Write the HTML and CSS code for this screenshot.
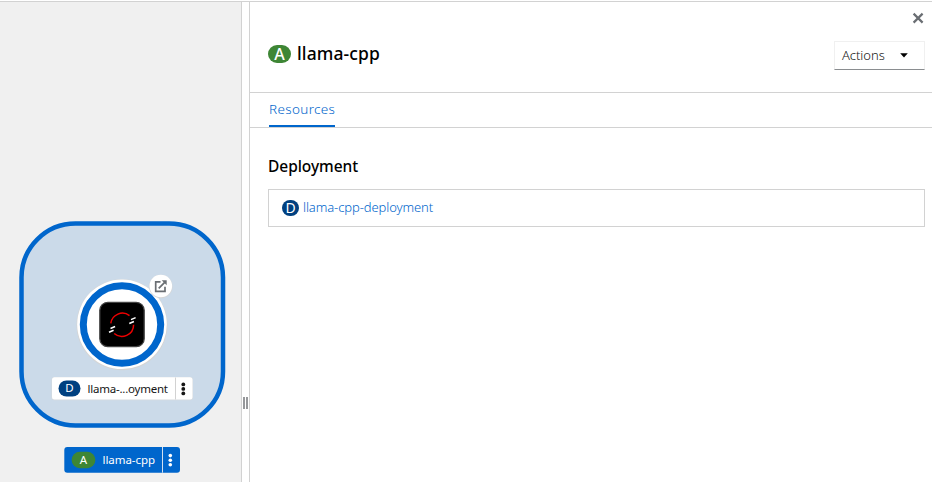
FILE: index.html
```html
<!DOCTYPE html>
<html lang="en">
<head>
<meta charset="utf-8">
<title>Topology</title>
<link rel="stylesheet" href="styles.css">
</head>
<body>
<div class="page">
  <main class="topology">
    <svg class="graph" width="241" height="480" viewBox="0 2 241 480">
      <rect class="group" x="21.5" y="223.5" width="201.500" height="202" rx="54"/>
      <circle class="node-shadow" cx="122" cy="324.800" r="45.500"/>
      <circle class="node-bg" cx="122" cy="324.300" r="44.800"/>
      <circle class="node-ring" cx="122" cy="324.500" r="38.700"/>
      <rect class="app-icon" x="99.800" y="302.300" width="44.400" height="44.400" rx="8"/>
      <g class="arc">
        <path d="M110.800 323.300A11.700 11.700 0 0 1 129.500 315.600"/>
        <path d="M133.600 324.700A11.700 11.700 0 0 1 114.200 333.500"/>
      </g>
      <path class="dashes" d="M131 319.600l4.600-2M129.300 323.500l4.600-2M110.500 328.500l4.600-2M109 332.300l4.600-2"/>
      <circle class="node-shadow" cx="160.800" cy="286.500" r="11.700"/>
      <circle class="node-bg" cx="160.800" cy="286" r="11.300"/>
      <path class="link-icon" d="M160.500 281.800h-4.800v9.500h9.300v-4.500M158.700 288.300l6-6"/>
      <path class="link-head" d="M161.700 280.200h5v5z"/>
      <rect class="label-shadow" x="51.500" y="377" width="141.500" height="23.300" rx="3"/>
      <rect class="label" x="52" y="377.300" width="140.500" height="22.200" rx="2.500"/>
      <path class="label-line" d="M175.500 377.500v22"/>
      <rect class="badge-d" x="58.500" y="380.500" width="22" height="16" rx="8"/>
      <text class="badge-text" x="69.500" y="392.300">D</text>
      <text class="node-text" x="87.500" y="393" textLength="80.500">llama-...oyment</text>
      <g class="dots"><circle cx="183.300" cy="384.400" r="1.900"/><circle cx="183.300" cy="388.900" r="1.900"/><circle cx="183.300" cy="393.400" r="1.900"/></g>
      <rect class="app-label" x="64.300" y="447" width="115.700" height="25.700" rx="3"/>
      <path class="app-line" d="M162.500 447v25.700"/>
      <rect class="badge-a" x="71.600" y="451.700" width="23.800" height="16.600" rx="8.300"/>
      <text class="badge-text" x="83.500" y="464.300">A</text>
      <text class="app-text" x="102.500" y="464.300" textLength="52.500">llama-cpp</text>
      <g class="app-dots"><circle cx="170.300" cy="455.600" r="1.800"/><circle cx="170.300" cy="460.200" r="1.800"/><circle cx="170.300" cy="464.800" r="1.800"/></g>
    </svg>
  </main>
  <div class="splitter"><span class="grip"></span></div>
  <aside class="panel">
    <header class="head">
      <div class="close-row">
        <svg width="12" height="12" viewBox="0 0 12 12"><path d="M1.600 1.600l9 9M10.600 1.600l-9 9"/></svg>
      </div>
      <div class="title-row">
        <h1 class="title"><span class="badge app">A</span><span class="title-text">llama-cpp</span></h1>
        <button class="actions"><span>Actions</span><svg width="8" height="5" viewBox="0 0 8 5"><path d="M0.200 0.300h7.600L4 4.600z"/></svg></button>
      </div>
    </header>
    <nav class="tabs"><a class="tab">Resources</a></nav>
    <section class="body">
      <h2 class="section-title">Deployment</h2>
      <div class="resource"><span class="badge dep">D</span><a class="link">llama-cpp-deployment</a></div>
    </section>
  </aside>
</div>
</body>
</html>
```
FILE: styles.css
```css
* { box-sizing: border-box; }
body { margin: 0; padding-top: 1px; background: #fff; font-family: "Noto Sans", sans-serif; color: #151515; overflow: hidden; }
.page { display: flex; width: 932px; height: 481px; border-top: 1px solid #d2d2d2; }
.topology { width: 241px; background: #f0f0f0; }
.graph { display: block; }
.group { fill: #cbdae9; stroke: #06c; stroke-width: 4.500; }
.node-shadow { fill: #d5d5d5; }
.node-bg { fill: #fff; }
.node-ring { fill: #fff; stroke: #06c; stroke-width: 7; }
.app-icon { fill: #000; stroke: #444; stroke-width: 1.300; }
.arc { fill: none; stroke: #e00; stroke-width: 1.500; }
.dashes { fill: none; stroke: #fff; stroke-width: 1.500; }
.link-icon { fill: none; stroke: #6a6e73; stroke-width: 1.700; }
.link-head { fill: #6a6e73; }
.label-shadow { fill: #d5d9dd; }
.label { fill: #fff; }
.label-line { stroke: #d2d2d2; }
.badge-d { fill: #004080; }
.badge-a { fill: #3e8635; }
.badge-text { fill: #fff; font-size: 11.500px; text-anchor: middle; }
.node-text { fill: #151515; font-size: 11.500px; }
.dots { fill: #151515; }
.app-label { fill: #06c; }
.app-line { stroke: #d2e0f0; }
.app-text { fill: #fff; font-size: 11.500px; }
.app-dots { fill: #fff; }
.splitter { width: 9px; border: solid #d2d2d2; border-width: 0 1px; padding: 395px 0 0 1px; }
.grip { display: block; width: 5px; height: 12px; border: solid #96989b; border-width: 0 2px; }
.panel { flex: 1; }
.head { height: 91px; border-bottom: 1px solid #d2d2d2; padding: 10px 7px 0 18px; }
.close-row { display: flex; justify-content: flex-end; padding-right: 1px; height: 29px; }
.close-row path { fill: none; stroke: #6a6e73; stroke-width: 2.200; }
.title-row { display: flex; justify-content: space-between; }
.title { display: flex; align-items: center; margin: 0; height: 26px; font-size: 17.500px; font-weight: 500; line-height: 24px; }
.title-text { letter-spacing: 0.100px; color: #000; padding-bottom: 2px; }
.badge { display: flex; align-items: center; justify-content: center; color: #fff; }
.app { width: 23px; height: 18px; border-radius: 9px; background: #3e8635; margin-right: 6px; font-size: 16px; }
.actions { display: flex; justify-content: space-between; align-items: center; width: 91px; height: 29px; margin: 0; padding: 0 16px 2px 7px; background: #fff; border: 1px solid #f0f0f0; border-bottom-color: #8a8d90; font: 300 13px "Noto Sans", sans-serif; letter-spacing: -0.050px; color: #151515; }
.actions svg { position: relative; top: 1px; }
.tabs { display: flex; height: 35px; border-bottom: 1px solid #d2d2d2; padding-left: 19px; }
.tab { height: 34px; width: 66px; border-bottom: 2px solid #06c; color: #06c; font-size: 13.500px; font-weight: 300; letter-spacing: 0.350px; line-height: 33px; white-space: nowrap; }
.body { padding: 26px 7px 0 18px; }
.section-title { margin: 0; height: 35px; font-size: 15.500px; font-weight: 500; letter-spacing: -0.050px; line-height: 24px; color: #000; }
.resource { display: flex; align-items: center; height: 38px; border: 1px solid #d2d2d2; padding: 0 0 1px 13px; }
.dep { width: 17px; height: 16px; border-radius: 8px; background: #004080; margin-right: 4px; font-size: 14px; }
.link { color: #06c; font-size: 13px; font-weight: 300; letter-spacing: -0.100px; line-height: 18px; padding-bottom: 1px; }
```
